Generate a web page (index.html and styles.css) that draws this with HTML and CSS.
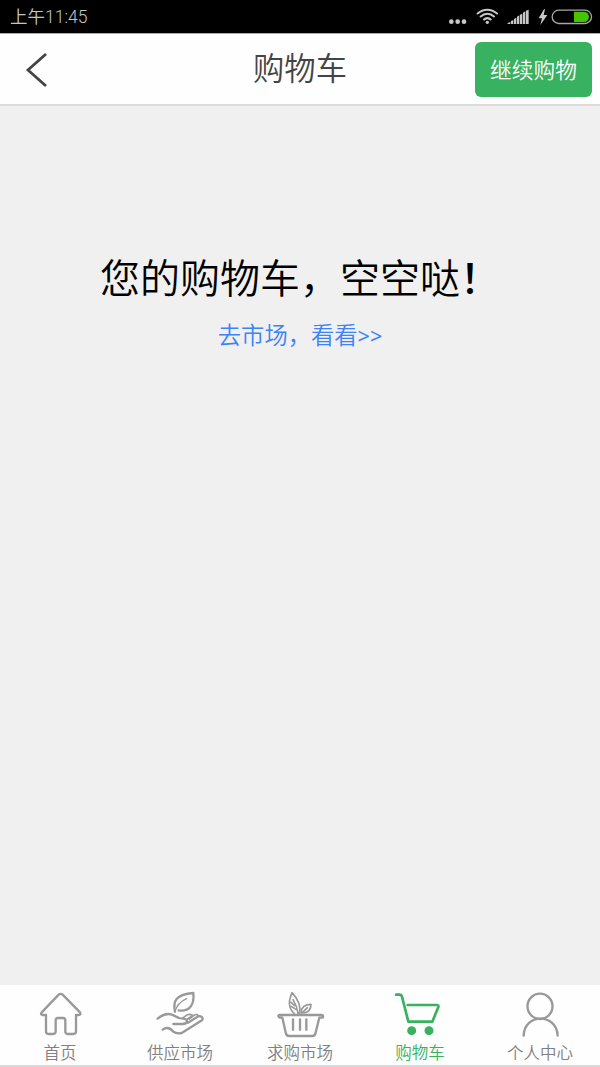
FILE: index.html
```html
<!DOCTYPE html>
<html lang="zh-CN">
<head>
    <meta charset="UTF-8">
    <meta name="viewport" content="width=device-width, initial-scale=1.0">
    <title>购物车</title>
    <link rel="stylesheet" href="styles.css">
</head>
<body>
    <div class="status-bar">
        <span class="time">上午11:45</span>
        <svg class="status-icons" viewBox="45 0 450 99">
            <g fill="#c8c8c8">
                <circle cx="64" cy="65" r="7"/>
                <circle cx="83" cy="65" r="7"/>
                <circle cx="102" cy="65" r="7"/>
                <circle cx="172" cy="67" r="5"/>
                <path d="M233 72V69L241 66V72ZM243 72V63L250 60V72ZM252 72V57L259 53V72ZM261 72V50L268 46V72ZM270 72V44L277 41V72ZM279 72V38L286 34V72ZM288 72V32L296 29V72Z"/>
                <path d="M342 28L326 55H336L331 75L352 45H341L345 28Z"/>
            </g>
            <g fill="none" stroke="#c8c8c8" stroke-width="6">
                <path d="M141 42Q172 17 203 42"/>
                <path d="M150 51Q172 32 194 51"/>
                <path d="M160 60Q172 49 184 60"/>
            </g>
            <rect x="366.500" y="30.500" width="118" height="40" rx="20" fill="#000" stroke="#a8a8a8" stroke-width="4"/>
            <path d="M432 35H462A15 15.500 0 0 1 462 66H432Z" fill="#48c400"/>
        </svg>
    </div>

    <header>
        <a class="back" href="#">
            <svg viewBox="0 0 24 36"><path d="M21 2L3 18L21 34"/></svg>
        </a>
        <h1>购物车</h1>
        <button class="btn-continue">继续购物</button>
    </header>

    <main>
        <p class="empty">您的购物车，空空哒<b>！</b></p>
        <a class="go-market" href="#">去市场，看看<span class="arrows">&gt;&gt;</span></a>
    </main>

    <nav>
        <a class="tab" href="#">
            <svg viewBox="105 39 150 144">
                <path d="M176 53Q182 48 188 53L240 106Q244 113 236 114H228V163Q228 171 220 171H203Q196 171 196 163V130Q196 123 189 123H174Q167 123 167 130V163Q167 171 159 171H145Q138 171 138 163V114H128Q120 113 125 106Z"/>
            </svg>
            <span>首页</span>
        </a>
        <a class="tab" href="#">
            <svg viewBox="105 39 150 144">
                <path d="M165 104C158 72 168 52 220 48C224 83 208 105 176 100"/>
                <path d="M165 104C170 84 182 73 200 65" stroke-width="4"/>
                <path d="M113 125C130 111 146 107 160 115C169 121 176 125 190 125Q202 126 201 134Q199 141 187 141H160"/>
                <path d="M128 158C140 149 151 153 160 164Q169 171 185 168L246 130Q251 122 242 118Q237 116 230 121L204 137"/>
                <path d="M187 124L202 113Q210 110 218 115L199 129M208 126L222 115Q232 109 237 118" stroke-width="5"/>
            </svg>
            <span>供应市场</span>
        </a>
        <a class="tab" href="#">
            <svg viewBox="105 39 150 144">
                <path d="M119 114H245Q252 115 248 122H238L226 170Q224 177 217 177H147Q140 177 138 170L127 122H119Q111 116 119 114Z"/>
                <path d="M159 127V158M180 127V158M199 127V158"/>
                <path d="M163 110C142 91 147 69 156 47C174 66 184 87 178 111M174 109C172 92 166 79 159 68M153 76L164 86M154 88L168 97" stroke-width="5"/>
                <path d="M184 108C182 91 195 82 213 82C213 98 204 106 192 108M185 109L202 92" stroke-width="5"/>
            </svg>
            <span>求购市场</span>
        </a>
        <a class="tab active" href="#">
            <svg viewBox="105 39 150 144">
                <path d="M108 53H118Q124 53 126 59L145 134H217L235 90Q237 84 230 84H143"/>
                <circle class="wheel" cx="155" cy="161" r="13.500"/>
                <circle class="wheel" cx="207" cy="161" r="13.500"/>
            </svg>
            <span>购物车</span>
        </a>
        <a class="tab" href="#">
            <svg viewBox="105 39 150 144">
                <ellipse cx="180" cy="88" rx="37.500" ry="38"/>
                <path d="M131 176C133 108 230 108 233 176"/>
            </svg>
            <span>个人中心</span>
        </a>
    </nav>
</body>
</html>
```
FILE: styles.css
```css
* {
    box-sizing: border-box;
}
body {
    font-family: "Noto Sans CJK SC", sans-serif;
    font-weight: 350;
    margin: 0;
    height: 1067px;
    display: flex;
    flex-direction: column;
    background-color: #f0f0f0;
    overflow: hidden;
}
a {
    text-decoration: none;
}
.status-bar {
    height: 33px;
    display: flex;
    justify-content: space-between;
    padding: 0 5px 0 10px;
    background-color: #000;
    color: #c4c4c4;
}
.time {
    font-family: Roboto, "Noto Sans CJK SC", sans-serif;
    font-size: 17.5px;
    line-height: 35px;
}
.status-icons {
    width: 150px;
    height: 33px;
}
header {
    height: 73px;
    display: grid;
    grid-template-columns: 150px 1fr 150px;
    align-items: center;
    background-color: #fefefe;
    border-top: 1px solid #aaa;
    border-bottom: 2px solid #dcdcdc;
}
.back {
    padding: 2px 0 0 25px;
}
.back svg {
    display: block;
    width: 24px;
    height: 36px;
    fill: none;
    stroke: #444;
    stroke-width: 2.8;
}
h1 {
    margin: 0;
    text-align: center;
    font-size: 31.3px;
    font-weight: inherit;
    line-height: 66px;
    height: 70px;
    color: #444;
}
.btn-continue {
    width: 117px;
    height: 55px;
    margin-right: 8px;
    padding: 0 0 2px;
    justify-self: end;
    border: none;
    border-radius: 6px;
    background-color: #38b160;
    color: #fff;
    font-family: inherit;
    font-weight: inherit;
    font-size: 21.7px;
}
main {
    flex: 1;
    padding-top: 145px;
    text-align: center;
}
.empty {
    margin: 0;
    font-size: 40px;
    line-height: 50px;
    color: #000;
}
.empty b {
    font-weight: 500;
}
.go-market {
    display: block;
    margin-top: 15px;
    font-size: 23.3px;
    line-height: 36px;
    color: #3c82f8;
}
.arrows {
    font-family: "Noto Sans", sans-serif;
    font-size: 21.5px;
    font-weight: 400;
}
nav {
    height: 82px;
    display: grid;
    grid-template-columns: repeat(5, 1fr);
    background-color: #fefefe;
    border-bottom: 2px solid #dadada;
}
.tab {
    display: flex;
    flex-direction: column;
    align-items: center;
    padding-top: 5px;
    color: #808080;
    font-size: 16.5px;
    line-height: 28px;
}
.tab svg {
    width: 50px;
    height: 48px;
    fill: none;
    stroke: #999;
    stroke-width: 7;
    stroke-linejoin: round;
    stroke-linecap: round;
}
.tab.active {
    color: #38b160;
}
.tab.active svg {
    stroke: #38b160;
    stroke-width: 8;
}
.wheel {
    fill: #38b160;
    stroke: none;
}
```
